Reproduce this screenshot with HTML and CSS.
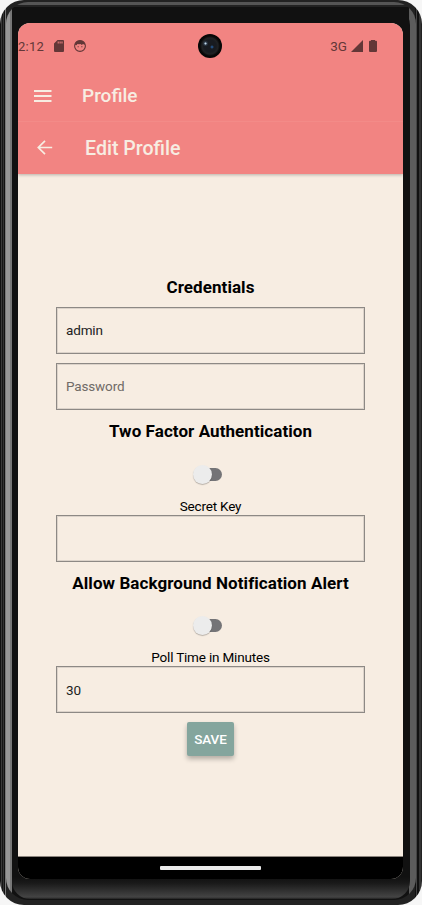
FILE: index.html
```html
<!DOCTYPE html>
<html lang="en">
<head>
<meta charset="utf-8">
<title>Edit Profile</title>
<link rel="stylesheet" href="styles.css">
</head>
<body>
<div class="phone">
  <div class="rim">
    <div class="bezel">
      <div class="screen">
        <header class="top">
          <div class="status">
            <span class="clock">2:12</span>
            <svg class="sd" width="10" height="12" viewBox="0 0 10 12"><path fill="currentColor" fill-rule="evenodd" d="M3.500 0H9a1 1 0 0 1 1 1v10a1 1 0 0 1-1 1H1a1 1 0 0 1-1-1V3.500zM3.700 1.400v2.200h1V1.400zM5.600 1.400v2.200h1V1.400zM7.500 1.400v2.200h1V1.400z"/></svg>
            <svg class="face" width="12" height="12" viewBox="0 0 12 12"><circle cx="6" cy="6" r="5.400" fill="none" stroke="currentColor" stroke-width="1.100"/><path fill="currentColor" d="M1 5Q1 .5 6 .5T11 5L9 3.900 7.800 4.900 6.500 4 5 4.300 3.500 4 2.500 5.200zM3.600 6.200h1.100v1.100H3.600zM7.300 6.200h1.100v1.100H7.300z"/></svg>
            <span class="net">3G</span>
            <svg class="signal" width="12" height="12" viewBox="0 0 12 12"><path fill="currentColor" d="M12 0v12H0z"/></svg>
            <svg class="battery" width="8" height="12" viewBox="0 0 8 12"><path fill="currentColor" d="M2 0h4v.8h1a1 1 0 0 1 1 1V11a1 1 0 0 1-1 1H1a1 1 0 0 1-1-1V1.800a1 1 0 0 1 1-1h1z"/></svg>
          </div>
          <div class="bar bar-main">
            <svg class="menu" width="18" height="12" viewBox="0 0 18 12"><path fill="currentColor" d="M0 0h17.500v1.900H0zM0 5h17.500v1.900H0zM0 10h17.500v1.900H0z"/></svg>
            <h1>Profile</h1>
          </div>
          <div class="bar bar-sub">
            <svg class="back" width="16" height="15" viewBox="0 0 16 15"><path fill="none" stroke="currentColor" stroke-width="1.700" d="M15.200 7.500H1.500M8 .8 1.300 7.500 8 14.200"/></svg>
            <h2>Edit Profile</h2>
          </div>
        </header>
        <main class="form">
          <h3>Credentials</h3>
          <input class="field user" type="text" value="admin">
          <input class="field" type="password" placeholder="Password">
          <h3 class="section">Two Factor Authentication</h3>
          <div class="switch"><span class="thumb"></span></div>
          <label for="secret">Secret Key</label>
          <input class="field" id="secret" type="text">
          <h3 class="section alerts">Allow Background Notification Alert</h3>
          <div class="switch"><span class="thumb"></span></div>
          <label for="poll">Poll Time in Minutes</label>
          <input class="field" id="poll" type="text" value="30">
          <button class="save" type="button">SAVE</button>
        </main>
        <div class="nav"><span class="handle"></span></div>
      </div>
    </div>
  </div>
  <div class="camera"></div>
</div>
</body>
</html>
```
FILE: styles.css
```css
* { box-sizing: border-box; }
body {
  margin: 0;
  background: #f6f6f6;
  font-family: Roboto, sans-serif;
  color: #000;
}
h1, h2, h3 { margin: 0; }
.phone {
  position: relative;
  width: 422px;
  height: 905px;
  padding: 2px 6px 5px;
  border-radius: 24px;
  background: linear-gradient(90deg, #111 0 1px, #3a3a3a 1px 2px, #161616 2px 3px, #333 3px 4px, #111 4px 5px, #777 5px 6px, #222 6px 415px, #111 415px 416px, #444 416px 417px, #111 417px 419px, #333 419px 421px, #222 421px);
}
.rim {
  height: 898px;
  padding: 5px 6px 1px;
  border-radius: 22px;
  background: linear-gradient(#555 0 3px, #222 3px 5px, transparent 5px), linear-gradient(90deg, #969696 0 4px, #777 4px 6px, #111 6px 403px, #5c5c5c 403px);
}
.bezel {
  height: 892px;
  padding: 16px 6px 20px;
  border-radius: 18px;
  background: linear-gradient(#111 0 870px, #191919 876px, #444 890px, #222);
}
.screen {
  display: flex;
  flex-direction: column;
  width: 385px;
  height: 856px;
  border-radius: 12px;
  overflow: hidden;
  background: #f7ede2;
}
.top {
  position: relative;
  height: 150.500px;
  flex: none;
  background: #f28482;
  color: #f7ede2;
  box-shadow: 0 1px 3px rgba(0, 0, 0, .25);
}
.status {
  display: flex;
  align-items: center;
  height: 47px;
  padding-bottom: 1px;
  color: #633737;
  font-size: 13px;
}
.clock { width: 36px; letter-spacing: .25px; }
.face { margin-left: 10px; }
.net { margin-left: auto; font-size: 13.500px; }
.signal { margin-left: 4px; }
.battery { margin: 0 26px 0 6px; }
.bar { display: flex; align-items: center; }
.bar h1, .bar h2 { line-height: 24px; font-weight: 500; }
.bar h1 { font-size: 19px; }
.bar h2 { font-size: 19.600px; padding-top: 3px; }
.bar-main { height: 52px; padding-left: 16px; border-bottom: 1px solid #f38b88; }
.bar-sub { height: 50px; padding-left: 19px; }
.menu { margin-right: 30px; }
.back { margin-right: 32px; }
.form {
  flex: 1;
  display: flex;
  flex-direction: column;
  align-items: center;
  padding-top: 103px;
}
h3 { font-size: 17px; line-height: 20px; font-weight: 700; letter-spacing: .07px; white-space: nowrap; }
.field {
  width: 309px;
  height: 47px;
  margin: 0 0 9px;
  padding: 0 9px;
  flex: none;
  border: 1px solid #8d8985;
  box-shadow: inset 0 0 0 1px rgba(141, 137, 133, .25);
  border-radius: 0;
  background: transparent;
  color: #222;
  font: 13.500px Roboto, sans-serif;
  letter-spacing: -.15px;
}
.field::placeholder { color: #706b67; opacity: 1; }
.user { margin-top: 10px; }
.section { margin-top: 2.500px; }
.alerts { margin-top: 1.500px; }
.switch {
  display: flex;
  align-items: center;
  width: 26px;
  height: 13px;
  margin: 27px 0 17px;
  transform: translateX(-2px);
  border-radius: 7px;
  background: #747477;
}
.alerts + .switch { margin: 26.500px 0 17px; }
.thumb {
  width: 19px;
  height: 19px;
  flex: none;
  margin-left: -3px;
  border-radius: 50%;
  background: #ececec;
  box-shadow: 0 1px 1px rgba(0, 0, 0, .25);
}
label { font-size: 13.500px; line-height: 17px; letter-spacing: -.18px; }
.save {
  width: 47px;
  height: 34px;
  padding: 0;
  border: 0;
  border-radius: 2px;
  background: #84a59d;
  color: #fff;
  font: 500 13.500px Roboto, sans-serif;
  letter-spacing: -.1px;
  box-shadow: 0 3px 5px rgba(0, 0, 0, .28);
}
.nav {
  height: 23px;
  display: flex;
  align-items: center;
  justify-content: center;
  border-top: 1px solid #8c857e;
  background: #000;
}
.handle { width: 101px; height: 4px; border-radius: 1px; background: #ebebeb; }
.camera {
  position: absolute;
  left: 198px;
  top: 34px;
  width: 24px;
  height: 24px;
  border-radius: 50%;
  background: radial-gradient(circle at 7.500px 9.500px, #c4dcec 0 .5px, rgba(52, 68, 85, .8) 1.500px, transparent 3px), radial-gradient(circle at 14px 13px, #24548a 0 .5px, transparent 2px), radial-gradient(circle, #181b20 0 6px, #202224 8px, #080808 10px, #000);
}
```
